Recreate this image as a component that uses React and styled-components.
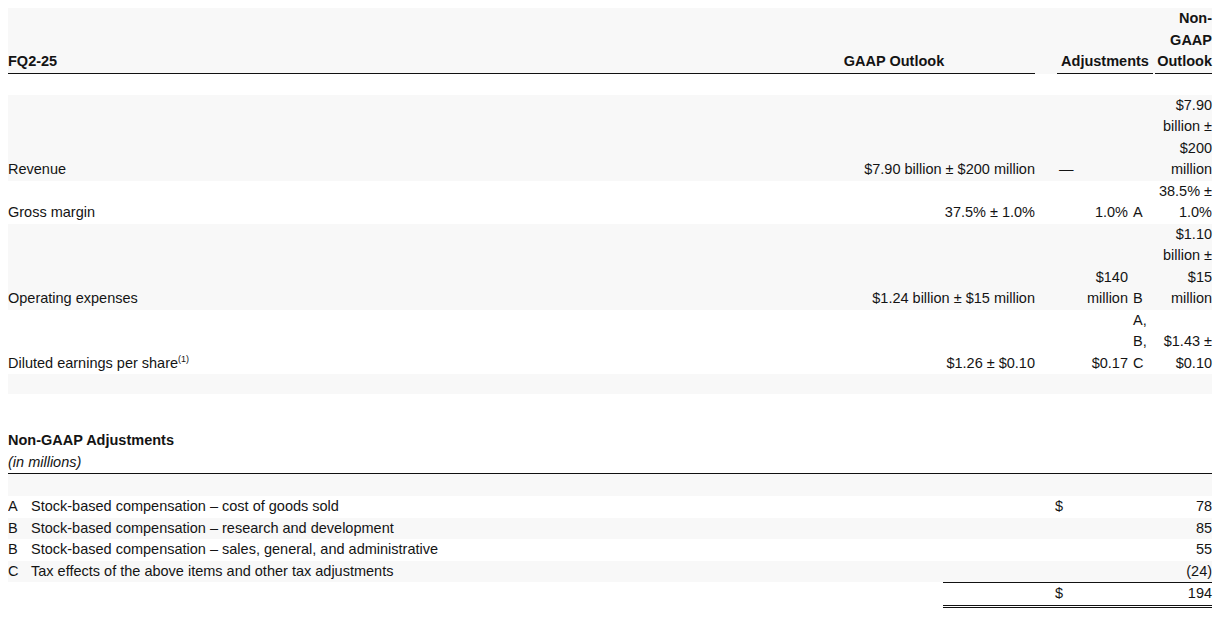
import React from 'react';
import styled, { createGlobalStyle } from 'styled-components';

const GlobalStyle = createGlobalStyle`
  body {
    margin: 8px;
    background: #fff;
    color: #141414;
    font-family: "Liberation Sans", Arial, sans-serif;
    font-size: 14.5px;
    line-height: 21.5px;
  }
`;

const SHADE = '#f8f8f8';

const Page = styled.div`
  width: 1204px;
`;

const Table = styled.table`
  width: 1204px;
  table-layout: fixed;
  border-collapse: separate;
  border-spacing: 0;
`;

const Row = styled.tr`
  background: ${(p) => (p.$shade ? SHADE : 'transparent')};
`;

const SpacerRow = styled.tr`
  height: ${(p) => p.$h || 21}px;
  background: ${(p) => (p.$shade ? SHADE : 'transparent')};
`;

const Head = styled.th`
  padding: 0;
  font-weight: 700;
  vertical-align: bottom;
  text-align: ${(p) => p.$align || 'left'};
  border-bottom: ${(p) => (p.$rule ? '1px solid #111' : 'none')};
`;

const Cell = styled.td`
  padding: 0 0 0 ${(p) => p.$pl || 0}px;
  vertical-align: bottom;
  text-align: ${(p) => p.$align || 'left'};
`;

const Sup = styled.sup`
  font-size: 9px;
  line-height: 0;
  vertical-align: 6px;
`;

const Caption = styled.div`
  margin-top: 36px;
  border-bottom: 1px solid #111;
`;

const CaptionTitle = styled.div`
  font-weight: 700;
`;

const CaptionNote = styled.div`
  font-style: italic;
`;

const TotalCell = styled.td`
  padding: 0 0 0 ${(p) => p.$pl || 0}px;
  text-align: ${(p) => p.$align || 'left'};
  border-top: 1px solid #111;
  border-bottom: 3px double #111;
`;

const outlook = [
  { label: 'Revenue', gaap: '$7.90 billion ± $200 million', adj: '—', dash: true, ref: '', non: '$7.90 billion ± $200 million', shade: true },
  { label: 'Gross margin', gaap: '37.5% ± 1.0%', adj: '1.0%', ref: 'A', non: '38.5% ± 1.0%' },
  { label: 'Operating expenses', gaap: '$1.24 billion ± $15 million', adj: '$140 million', ref: 'B', non: '$1.10 billion ± $15 million', shade: true },
  { label: 'Diluted earnings per share', sup: '(1)', gaap: '$1.26 ± $0.10', adj: '$0.17', ref: 'A, B, C', non: '$1.43 ± $0.10' },
];

const adjustments = [
  { ref: 'A', text: 'Stock-based compensation – cost of goods sold', sign: '$', value: '78' },
  { ref: 'B', text: 'Stock-based compensation – research and development', value: '85', shade: true },
  { ref: 'B', text: 'Stock-based compensation – sales, general, and administrative', value: '55' },
  { ref: 'C', text: 'Tax effects of the above items and other tax adjustments', value: '(24)', shade: true },
];

const App = () => (
  <Page>
    <GlobalStyle />
    <Table>
      <colgroup>
        <col style={{ width: 745 }} />
        <col style={{ width: 282 }} />
        <col style={{ width: 22 }} />
        <col style={{ width: 71 }} />
        <col style={{ width: 25 }} />
        <col style={{ width: 2 }} />
        <col style={{ width: 57 }} />
      </colgroup>
      <tbody>
        <Row $shade>
          <Head $rule>FQ2-25</Head>
          <Head $rule $align='center'>GAAP Outlook</Head>
          <Head />
          <Head $rule $align='center' colSpan={2}>Adjustments</Head>
          <Head />
          <Head $rule $align='right'>Non-GAAP Outlook</Head>
        </Row>
        <SpacerRow $h={21} />
        {outlook.map((r) => (
          <Row key={r.label} $shade={r.shade}>
            <Cell>
              {r.label}
              {r.sup && <Sup>{r.sup}</Sup>}
            </Cell>
            <Cell $align='right'>{r.gaap}</Cell>
            <Cell />
            <Cell $align={r.dash ? 'left' : 'right'} $pl={r.dash ? 2 : 0}>{r.adj}</Cell>
            <Cell $pl={5}>{r.ref}</Cell>
            <Cell />
            <Cell $align='right'>{r.non}</Cell>
          </Row>
        ))}
        <SpacerRow $h={20} $shade>
          <td colSpan={7} />
        </SpacerRow>
      </tbody>
    </Table>

    <Caption>
      <CaptionTitle>Non-GAAP Adjustments</CaptionTitle>
      <CaptionNote>(in millions)</CaptionNote>
    </Caption>
    <Table>
      <colgroup>
        <col style={{ width: 23 }} />
        <col style={{ width: 912 }} />
        <col style={{ width: 110 }} />
        <col style={{ width: 97 }} />
        <col style={{ width: 62 }} />
      </colgroup>
      <tbody>
        <SpacerRow $h={22} $shade>
          <td colSpan={5} />
        </SpacerRow>
        {adjustments.map((r, i) => (
          <Row key={i} $shade={r.shade}>
            <Cell>{r.ref}</Cell>
            <Cell>{r.text}</Cell>
            <Cell />
            <Cell $pl={2}>{r.sign}</Cell>
            <Cell $align='right'>{r.value}</Cell>
          </Row>
        ))}
        <tr>
          <Cell />
          <Cell />
          <TotalCell />
          <TotalCell $pl={2}>$</TotalCell>
          <TotalCell $align='right'>194</TotalCell>
        </tr>
      </tbody>
    </Table>
  </Page>
);

export default App;
